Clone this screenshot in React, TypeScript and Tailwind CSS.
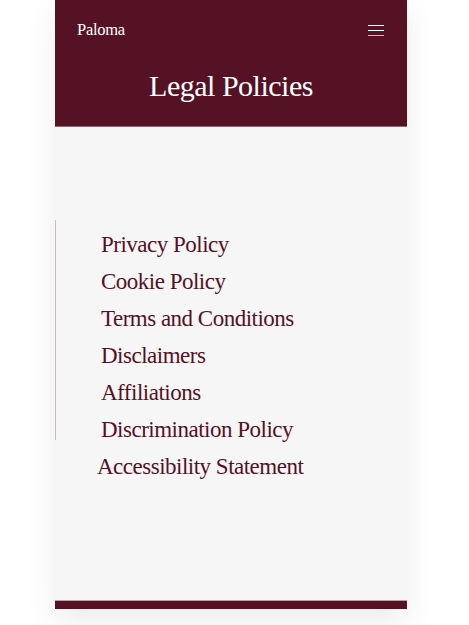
import React from 'react';

const links = [
  'Privacy Policy',
  'Cookie Policy',
  'Terms and Conditions',
  'Disclaimers',
  'Affiliations',
  'Discrimination Policy',
];

export default function App() {
  return (
    <div className="w-[469px] h-[625px] bg-white overflow-hidden font-['Liberation_Serif',serif]">
      <div className="ml-[55px] w-[352px] shadow-[0_12px_30px_rgba(0,0,0,0.08)]">
        {/* Header */}
        <header className="h-[127px] bg-[#541224] border-b border-[#8c6a73] text-white px-[22px]">
          <div className="flex items-center justify-between pt-[18px]">
            <span className="text-[16.5px] tracking-[-0.3px]">Paloma</span>
            <div className="flex flex-col gap-[4px] mr-[1px]">
              <span className="block w-[16px] h-[1px] bg-white" />
              <span className="block w-[16px] h-[1px] bg-white" />
              <span className="block w-[16px] h-[1px] bg-white/70" />
            </div>
          </div>
          <h1 className="text-center text-[30px] leading-none mt-[28px] tracking-[-0.5px]">Legal Policies</h1>
        </header>

        {/* Content */}
        <main className="h-[473px] bg-[#f6f6f6] pt-[93px]">
          <div className="border-l border-[#c9bcc0] h-[220px] pt-[6px]">
            <ul className="text-[#541224] text-[23px] leading-[37px] tracking-[-0.5px]">
              {links.map((l) => (
                <li key={l} className="pl-[45px]">{l}</li>
              ))}
              <li className="pl-[41px]">Accessibility Statement</li>
            </ul>
          </div>
        </main>

        {/* Footer strip */}
        <div className="h-[9px] bg-[#541224] border-t border-[#b9a0a6]" />
      </div>
    </div>
  );
}
